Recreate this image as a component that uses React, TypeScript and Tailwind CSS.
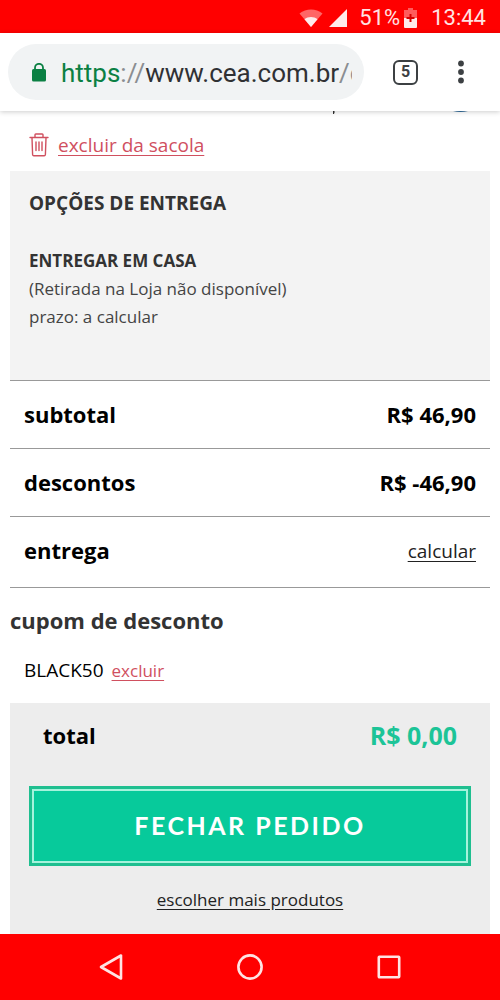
import type { ReactNode } from 'react';

function StatusBar() {
  return (
    <div className="flex h-[33px] items-center justify-end bg-[#ff0000] pt-0.5 pr-3.5 font-['Roboto',sans-serif] text-[22px] leading-6 text-[#ffe3e3]">
      <svg className="mr-1.5" width="24" height="18" viewBox="0 0 24 18" aria-hidden="true">
        <path d="M12 18 0.5 4.5C7-1 17-1 23.5 4.5Z" fill="#ff6666" />
        <path d="M12 18 5.5 10.2C9 7.4 15 7.4 18.5 10.2Z" fill="#ffeaea" />
      </svg>
      <svg className="mr-3" width="18" height="18" viewBox="0 0 18 18" aria-hidden="true">
        <path d="M18 0v18H0Z" fill="#ffeaea" />
      </svg>
      <span>51%</span>
      <svg className="mr-3.5 ml-1" width="13" height="20" viewBox="0 0 13 20" aria-hidden="true">
        <path d="M4 0h5v2h4v9H0V2h4Z" fill="#ff5c5c" />
        <path d="M0 10h13v9a1 1 0 0 1-1 1H1a1 1 0 0 1-1-1Z" fill="#ffeaea" />
        <path d="M5.500 6h2v3h3v2h-3v3h-2v-3h-3V9h3Z" fill="#d90000" />
      </svg>
      <span>13:44</span>
    </div>
  );
}

function BrowserBar() {
  return (
    <header className="relative z-10 flex h-[78px] items-center bg-white pr-[21px] pl-2 font-['Roboto',sans-serif] shadow-[0_1px_5px_rgba(0,0,0,0.2)]">
      <button
        type="button"
        aria-label="Endereço"
        className="flex h-14 min-w-0 flex-1 items-center rounded-full bg-[#f1f3f4] pr-3 pl-6"
      >
        <svg className="mr-[15px] shrink-0" width="14" height="19" viewBox="0 0 14 19" aria-hidden="true">
          <path d="M3 8V4.800a4 4 0 0 1 8 0V8" fill="none" stroke="#0b8043" strokeWidth="1.8" />
          <rect y="6" width="14" height="12.5" rx="1.6" fill="#0b8043" />
        </svg>
        <span className="overflow-hidden pt-0.5 text-[26px] leading-8 whitespace-nowrap text-[#303134]">
          <span className="text-[#0b8043]">https</span>
          <span className="text-[#8a8d91]">://</span>
          www.cea.com.br
          <span className="text-[#8a8d91]">/c</span>
        </span>
      </button>
      <button
        type="button"
        aria-label="Abas"
        className="mr-6 ml-[29px] flex size-[25px] items-center justify-center rounded-md border-2 border-[#3c4043] text-base leading-5 font-bold text-[#3c4043]"
      >
        5
      </button>
      <button type="button" aria-label="Menu" className="flex w-[37px] justify-center">
        <svg width="6" height="24" viewBox="0 0 6 24" fill="#3c4043" aria-hidden="true">
          <circle cx="3" cy="3.500" r="2.900" />
          <circle cx="3" cy="12" r="2.900" />
          <circle cx="3" cy="20.500" r="2.900" />
        </svg>
      </button>
    </header>
  );
}

function TrashIcon() {
  return (
    <svg
      width="20"
      height="24"
      viewBox="0 0 20 24"
      fill="none"
      stroke="#d0505f"
      strokeWidth="1.4"
      strokeLinecap="round"
      strokeLinejoin="round"
      aria-hidden="true"
    >
      <path d="M1 4.5h18M6 4V1.8q0-.8.8-.8h6.400q.8 0 .8.8V4M3 5l.6 16.500q.1 1.200 1.200 1.200h10.400q1.100 0 1.200-1.200L17 5M7 9v8.500M10 9v8.500M13 9v8.500" />
    </svg>
  );
}

function SummaryRow({ label, children }: { label: string; children: ReactNode }) {
  return (
    <div className="flex h-[68px] items-center justify-between border-t border-[#999] px-3.5 pb-0.5">
      <dt className="text-[22px] leading-7 font-bold">{label}</dt>
      <dd className="text-[22px] leading-7 font-bold">{children}</dd>
    </div>
  );
}

function NavBar() {
  return (
    <nav className="flex h-[66px] items-center justify-around bg-[#ff0000] px-[42px]">
      <button type="button" aria-label="Voltar">
        <svg width="26" height="28" viewBox="0 0 26 28" fill="none" stroke="#ffe3e3" strokeWidth="2.6" aria-hidden="true">
          <path d="M23 2.500v23L3 14Z" strokeLinejoin="round" />
        </svg>
      </button>
      <button type="button" aria-label="Início">
        <svg width="28" height="28" viewBox="0 0 28 28" fill="none" stroke="#ffe3e3" strokeWidth="2.6" aria-hidden="true">
          <circle cx="14" cy="14" r="11.600" />
        </svg>
      </button>
      <button type="button" aria-label="Recentes">
        <svg width="26" height="28" viewBox="0 0 26 28" fill="none" stroke="#ffe3e3" strokeWidth="2.6" aria-hidden="true">
          <rect x="2.800" y="3.800" width="20.400" height="20.400" rx="0.600" />
        </svg>
      </button>
    </nav>
  );
}

export default function App() {
  return (
    <div className="flex min-h-screen flex-col bg-white font-['Open_Sans',sans-serif] text-black">
      <StatusBar />
      <BrowserBar />

      <main className="flex flex-1 flex-col px-2.5">
        {/* tail of the item row scrolled under the browser bar */}
        <div className="flex h-5 justify-end pr-5">
          <svg width="140" height="4" viewBox="0 0 140 4" aria-hidden="true">
            <path d="M3 0h1.500v1.500L4 3H3Z" fill="#333" />
            <path d="M123 0h15q-7.500 2-15 0Z" fill="#2d6a99" />
          </svg>
        </div>

        <div className="flex h-10 items-start gap-[9px] pl-[19px] pt-0.5">
          <TrashIcon />
          <a href="#excluir" className="text-[19px] leading-6 text-[#d0505f] underline underline-offset-3">
            excluir da sacola
          </a>
        </div>

        <section className="h-[209px] bg-[#f3f3f3] px-[19px] pt-[18px] text-[17px] leading-7 text-[#444]">
          <h2 className="mb-[30px] text-[19px] leading-7 font-bold text-[#333]">OPÇÕES DE ENTREGA</h2>
          <h3 className="font-bold text-[#333]">ENTREGAR EM CASA</h3>
          <p>(Retirada na Loja não disponível)</p>
          <p>prazo: a calcular</p>
        </section>

        <dl className="border-b border-[#999] pb-[3px]">
          <SummaryRow label="subtotal">R$ 46,90</SummaryRow>
          <SummaryRow label="descontos">R$ -46,90</SummaryRow>
          <SummaryRow label="entrega">
            <a href="#calcular" className="text-[19px] font-normal text-[#222] underline underline-offset-3">
              calcular
            </a>
          </SummaryRow>
        </dl>

        <section className="pt-[18px] pb-[18px]">
          <h2 className="text-[22px] leading-7 font-bold text-[#333]">cupom de desconto</h2>
          <p className="flex items-baseline gap-2 pt-[22px] pl-3.5 text-[19px] leading-7">
            BLACK50
            <a href="#excluir-cupom" className="text-[17px] text-[#d0505f] underline underline-offset-3">
              excluir
            </a>
          </p>
        </section>

        <section className="flex-1 bg-[#ededed] px-[19px] pt-[18px]">
          <div className="flex items-center justify-between px-3.5 leading-7 font-bold">
            <span className="text-[22px]">total</span>
            <span className="text-[25px] leading-7 text-[#1cc497]">R$ 0,00</span>
          </div>
          <button
            type="button"
            className="mt-[37px] block w-full border-3 border-[#1fbf90] bg-[#a5f3dc] p-0.5 font-['Lato',sans-serif] text-[25px] leading-8 font-bold text-white"
          >
            <span className="block bg-[#07ca9b] pt-[18px] pb-5 tracking-widest">FECHAR PEDIDO</span>
          </button>
          <p className="pt-5 text-center">
            <a href="#produtos" className="text-[17px] leading-7 text-[#222] underline underline-offset-3">
              escolher mais produtos
            </a>
          </p>
        </section>
      </main>

      <NavBar />
    </div>
  );
}
